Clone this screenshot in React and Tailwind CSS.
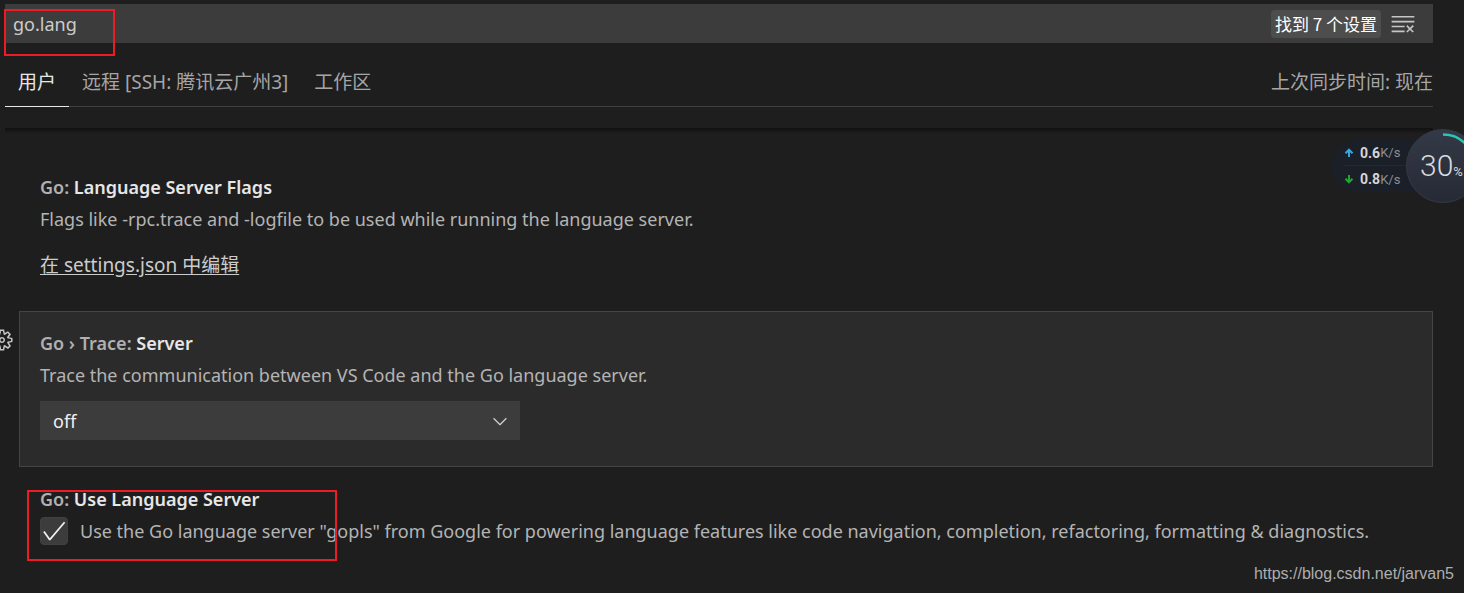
import { useState } from "react"
import { VscCheck, VscChevronDown, VscClearAll, VscGear } from "react-icons/vsc"

const TABS = ["用户", "远程 [SSH: 腾讯云广州3]", "工作区"]

const SearchBar = () => {
  const [query, setQuery] = useState("go.lang")

  return (
    <div className="relative flex h-[39px] items-center bg-[#3c3c3c] pr-[17px]">
      <input
        type="text"
        aria-label="搜索设置"
        value={query}
        onChange={(event) => setQuery(event.target.value)}
        className="h-full min-w-0 flex-1 bg-transparent px-2 text-[#cccccc] outline-none"
      />
      <span className="rounded-sm bg-[#4d4d4d] px-1 font-['Noto_Sans_CJK_SC',sans-serif] text-[17px] leading-7 text-white">
        找到 7 个设置
      </span>
      <button type="button" aria-label="清除设置搜索输入" className="ml-[9px] text-[#c5c5c5]">
        <VscClearAll className="size-[26px]" />
      </button>
      <div className="pointer-events-none absolute -left-px top-[5px] h-[47px] w-[111px] border-2 border-[#ed1c24]" />
    </div>
  )
}

const ScopeTabs = () => {
  const [active, setActive] = useState(TABS[0])

  return (
    <div className="mt-4 flex h-12 items-stretch border-b border-[#404040] text-[19px]">
      {TABS.map((tab) => (
        <button
          key={tab}
          type="button"
          onClick={() => setActive(tab)}
          className={`-mb-px border-b px-[13px] ${
            tab === active ? "border-[#e7e7e7] text-[#e7e7e7]" : "border-transparent text-[#a6a6a6]"
          }`}
        >
          {tab}
        </button>
      ))}
      <span className="ml-auto self-center text-[#a6a6a6]">上次同步时间: 现在</span>
    </div>
  )
}

const Setting = ({ id, category, label, focused, children }) => (
  <section
    aria-labelledby={id}
    className={`relative border px-5 pt-[15px] ${
      focused ? "min-h-[156px] border-[#454545] bg-[#2b2b2b]" : "border-transparent"
    }`}
  >
    {focused && (
      <button type="button" aria-label="更多操作" className="absolute -left-[30px] top-4 text-[#c5c5c5]">
        <VscGear className="size-6" />
      </button>
    )}
    <h2 id={id} className="leading-8 font-semibold text-[#e7e7e7]">
      <span className="text-[#b0b0b0]">{category}: </span>
      {label}
    </h2>
    {children}
  </section>
)

const SpeedRow = ({ direction, value }) => (
  <div className="flex h-[26px] items-center">
    <svg
      viewBox="0 0 10 10"
      className={`size-[10px] ${direction === "up" ? "text-[#37a5e4]" : "rotate-180 text-[#1fa82c]"}`}
      fill="none"
      stroke="currentColor"
      strokeWidth="2"
      aria-hidden="true"
    >
      <path d="M5 9V2M1.5 5.2 5 1.7 8.5 5.2" />
    </svg>
    <span className="ml-1.5 text-sm font-bold text-[#d4d6da]">{value}</span>
    <span className="pt-0.5 text-[13px] text-[#8b8e95]">K/s</span>
  </div>
)

const NetworkMonitor = () => (
  <aside className="absolute right-0 top-[129px] h-[74px] w-[132px] overflow-hidden font-[Roboto,sans-serif]">
    <div className="mt-[11px] h-[52px] w-28 divide-y divide-[#232831] rounded-l-full bg-[#1b1f28] pl-3">
      <SpeedRow direction="up" value="0.6" />
      <SpeedRow direction="down" value="0.8" />
    </div>
    <div className="absolute left-[74px] top-0 size-[74px] rounded-full border border-[#343a47] bg-linear-to-b from-[#343947] to-[#262a35]">
      <svg viewBox="0 0 72 72" className="absolute inset-0 size-full" fill="none" aria-hidden="true">
        <path d="M36 4.5A31.5 31.5 0 0 1 66 45.7" stroke="#2fc4b2" strokeWidth="2.4" />
      </svg>
      <p className="ml-[13px] flex items-baseline text-[30px] leading-[72px] font-light text-[#d8dade]">
        30<span className="text-[13px] font-normal">%</span>
      </p>
    </div>
  </aside>
)

export default function App() {
  const [trace, setTrace] = useState("off")
  const [useServer, setUseServer] = useState(true)

  return (
    <div className="relative min-h-screen overflow-hidden bg-[#1e1e1e] pt-1 pr-[31px] pl-[5px] font-['Noto_Sans','Noto_Sans_CJK_SC',sans-serif] text-lg text-[#b4b4b4]">
      <header>
        <SearchBar />
        <ScopeTabs />
      </header>

      <main className="mt-[21px]">
        <div className="h-[5px] bg-linear-to-b from-[#111111] to-[#1c1c1c]" />
        <div className="mt-[22px] pl-[14px]">
          <Setting id="server-flags" category="Go" label="Language Server Flags">
            <p className="leading-8">Flags like -rpc.trace and -logfile to be used while running the language server.</p>
            <a
              href="#settings-json"
              className="mt-[14px] mb-[29px] inline-block text-[19px] leading-8 text-[#cccccc] underline underline-offset-2"
            >
              在 settings.json 中编辑
            </a>
          </Setting>

          <Setting id="trace-server" category="Go › Trace" label="Server" focused>
            <p className="leading-8">Trace the communication between VS Code and the Go language server.</p>
            <div className="relative mt-[10px] w-[480px] max-w-full">
              <select
                aria-labelledby="trace-server"
                value={trace}
                onChange={(event) => setTrace(event.target.value)}
                className="h-[39px] w-full appearance-none bg-[#3c3c3c] px-[13px] text-[#f0f0f0] outline-none"
              >
                <option value="off">off</option>
                <option value="messages">messages</option>
                <option value="verbose">verbose</option>
              </select>
              <VscChevronDown className="pointer-events-none absolute top-[9px] right-[9px] size-[22px] text-[#d0d0d0]" />
            </div>
          </Setting>

          <Setting id="use-server" category="Go" label="Use Language Server">
            <label className="flex items-center gap-3 leading-8">
              <span className="relative size-7 shrink-0">
                <input
                  type="checkbox"
                  checked={useServer}
                  onChange={(event) => setUseServer(event.target.checked)}
                  className="peer block size-7 appearance-none rounded-sm border border-[#404040] bg-[#3c3c3c]"
                />
                <VscCheck className="pointer-events-none absolute inset-0 hidden size-7 text-[#f0f0f0] peer-checked:block" />
              </span>
              <span>
                Use the Go language server "gopls" from Google for powering language features like code navigation,
                completion, refactoring, formatting & diagnostics.
              </span>
            </label>
            <div className="pointer-events-none absolute left-[7px] top-[22px] h-[71px] w-[310px] border-2 border-[#ed1c24]" />
          </Setting>
        </div>
      </main>

      <NetworkMonitor />
      <a
        href="https://blog.csdn.net/jarvan5"
        className="absolute right-[10px] bottom-[7px] font-['Liberation_Sans',sans-serif] text-base text-[#adadad]"
      >
        https://blog.csdn.net/jarvan5
      </a>
    </div>
  )
}
